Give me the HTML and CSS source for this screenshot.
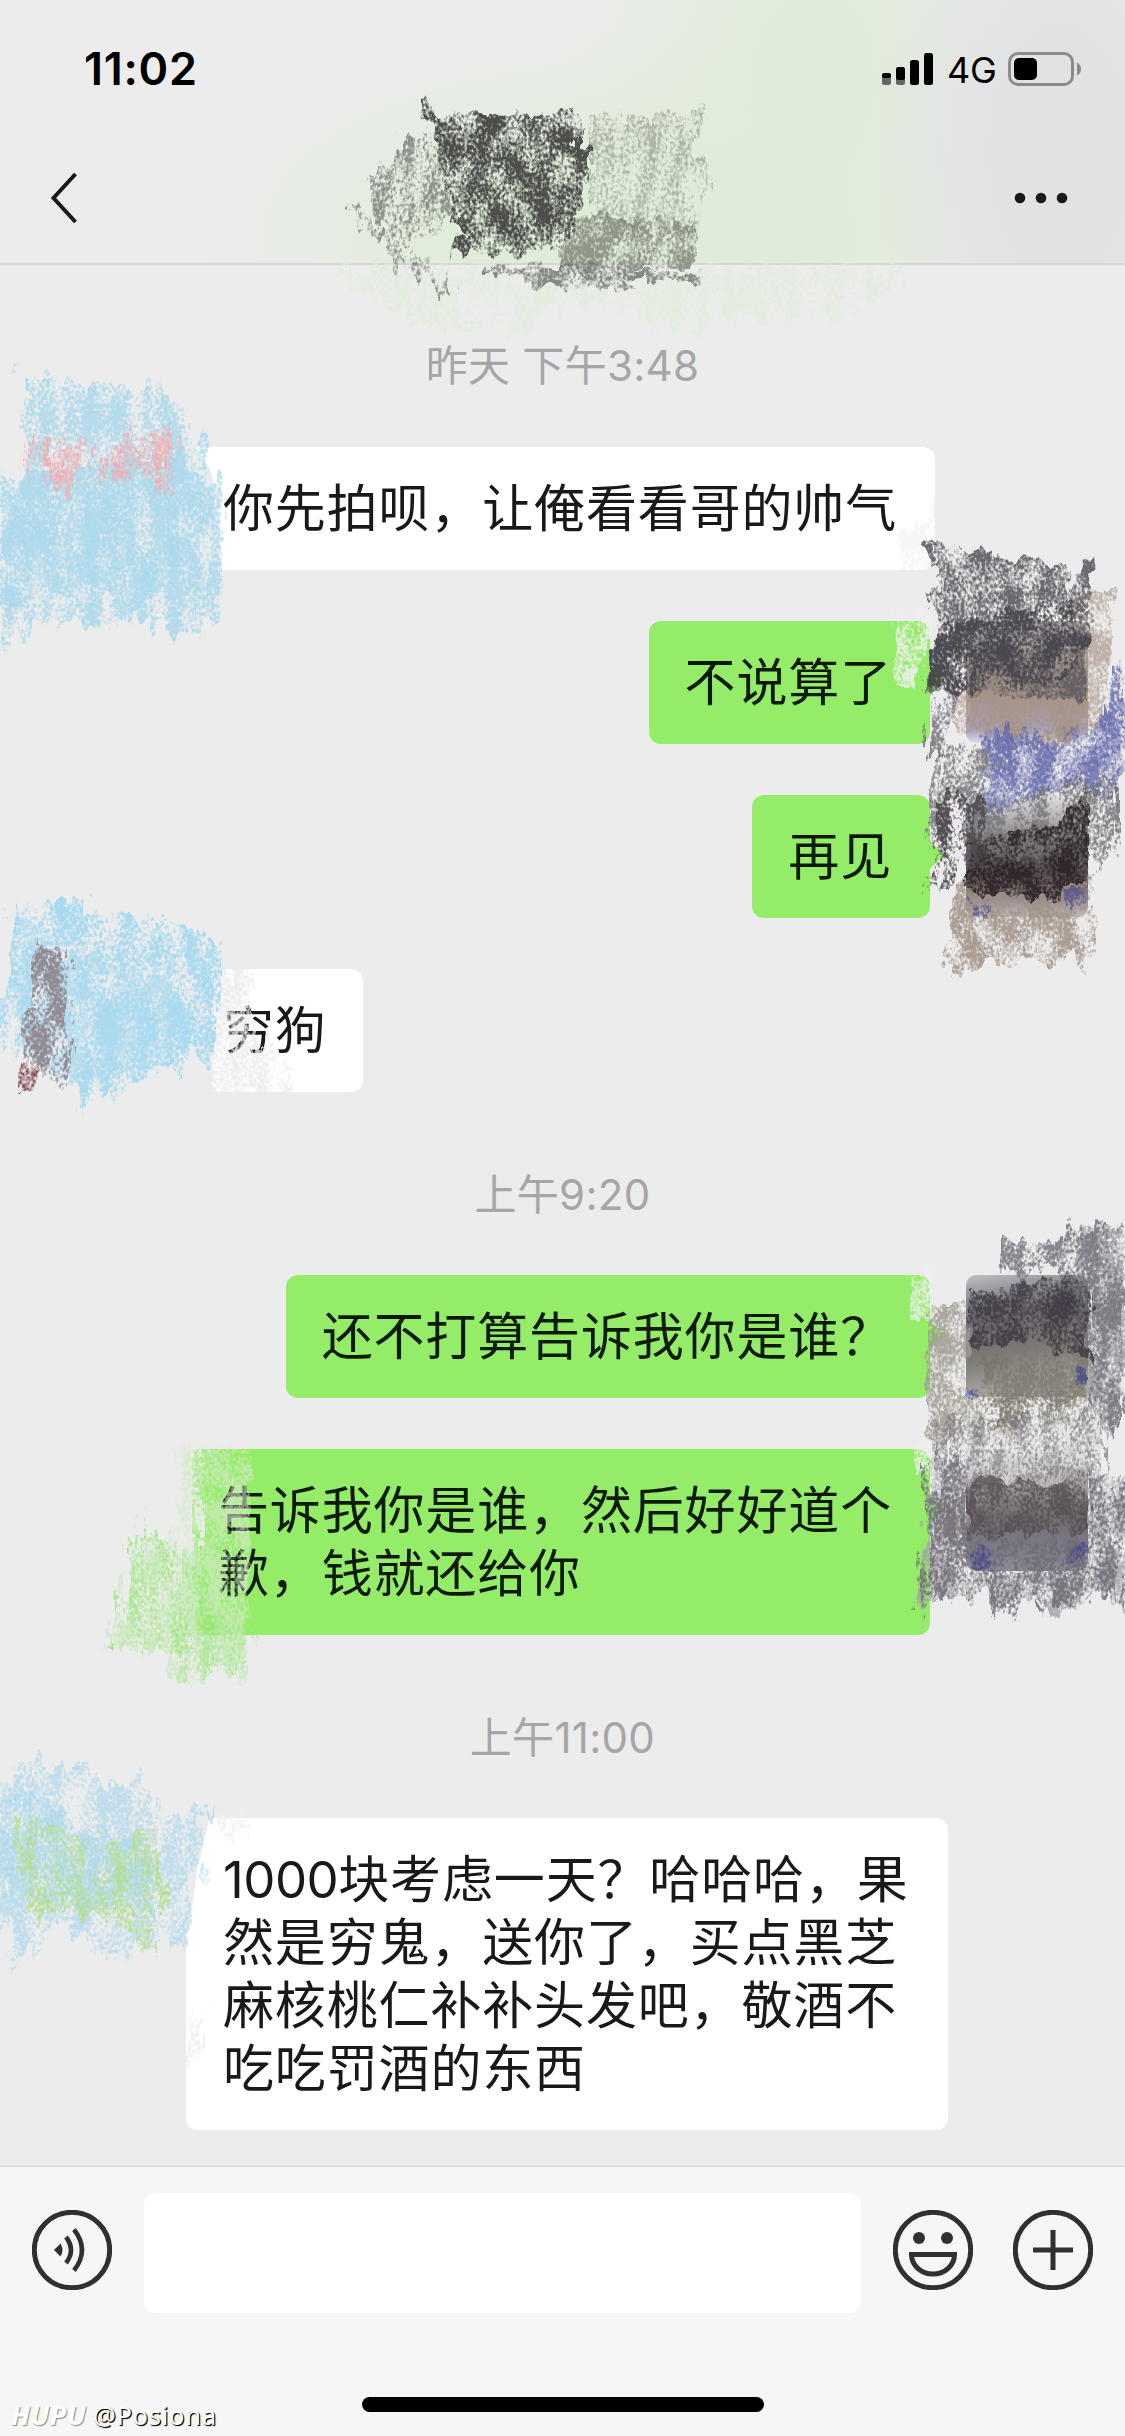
FILE: index.html
```html
<!DOCTYPE html>
<html lang="zh-CN">
<head>
<meta charset="utf-8">
<title>聊天</title>
<link rel="stylesheet" href="styles.css">
</head>
<body>
<div class="screen">
  <header class="header">
    <div class="status">
      <span class="clock">11:02</span>
      <div class="indicators">
        <svg class="signal" viewBox="0 0 51 32"><rect x="0" y="20" width="9" height="12" rx="2.5" fill="#666"/><rect x="0" y="20" width="9" height="5" rx="2.5"/><rect x="14" y="14" width="9" height="18" rx="2.5" fill="#666"/><rect x="14" y="14" width="9" height="13" rx="2.5"/><rect x="28" y="7" width="9" height="25" rx="2.5"/><rect x="42" y="0" width="9" height="32" rx="2.5"/></svg>
        <span class="network">4G</span>
        <svg class="battery" viewBox="0 0 74 34"><rect x="1.5" y="1.5" width="63" height="31" rx="8.5" fill="none" stroke="#8b8b8c" stroke-width="3"/><rect x="6" y="6" width="23" height="22" rx="5"/><path d="M69 10.500q4 2 4 6.500t-4 6.500z" fill="#8b8b8c"/></svg>
      </div>
    </div>
    <nav class="nav">
      <svg class="back" viewBox="0 0 28 52"><path d="M25.500 2L3.500 26l22 24" fill="none" stroke="#191919" stroke-width="4"/></svg>
      <svg class="more" viewBox="0 0 54 12"><circle cx="6" cy="6" r="5.300"/><circle cx="27" cy="6" r="5.300"/><circle cx="48" cy="6" r="5.300"/></svg>
    </nav>
  </header>

  <main class="chat">
    <time class="stamp first">昨天 下午3:48</time>
    <div class="row"><i class="avatar"></i><p class="bubble">你先拍呗，让俺看看哥的帅气</p></div>
    <div class="row mine"><p class="bubble">不说算了</p><i class="avatar warm"></i></div>
    <div class="row mine"><p class="bubble">再见</p><i class="avatar dark"></i></div>
    <div class="row"><i class="avatar"></i><p class="bubble short">穷狗</p></div>
    <time class="stamp">上午9:20</time>
    <div class="row mine"><p class="bubble">还不打算告诉我你是谁？</p><i class="avatar dusk"></i></div>
    <div class="row mine"><p class="bubble">告诉我你是谁，然后好好道个<br>歉，钱就还给你</p><i class="avatar night"></i></div>
    <time class="stamp last">上午11:00</time>
    <div class="row"><i class="avatar"></i><p class="bubble wide"><span class="digits">1000</span>块考虑一天？哈哈哈，果<br>然是穷鬼，送你了，买点黑芝<br>麻核桃仁补补头发吧，敬酒不<br>吃吃罚酒的东西</p></div>
  </main>

  <footer class="composer">
    <div class="tools">
      <svg class="tool" viewBox="0 0 80 80"><circle cx="40" cy="40" r="37.700"/><path d="M22 40l6.500-6.500q4 6.500 0 13z" fill="#303030" stroke="none"/><path d="M34 27q10 13 0 26M42 19.500q16 20.500 0 41" stroke-width="4.600"/></svg>
      <div class="input"></div>
      <svg class="tool smile" viewBox="0 0 80 80"><circle cx="40" cy="40" r="37.700"/><circle cx="26" cy="28" r="6" fill="#303030" stroke="none"/><circle cx="54" cy="28" r="6" fill="#303030" stroke="none"/><path d="M18.500 44.500h43a21.500 19.500 0 0 1-43 0z"/></svg>
      <svg class="tool" viewBox="0 0 80 80"><circle cx="40" cy="40" r="37.700"/><path d="M20 40h40M40 20v40"/></svg>
    </div>
    <div class="bottom">
      <div class="credit"><b>HUPU</b><span>@Posiona</span></div>
      <div class="home"></div>
    </div>
  </footer>

  <!-- Chalk strokes brushed over names and avatars -->
  <svg class="chalk" viewBox="0 0 1125 2436">
    <defs>
      <filter id="faint" x="-10%" y="-10%" width="120%" height="120%" color-interpolation-filters="sRGB">
        <feTurbulence type="fractalNoise" baseFrequency=".34 .24" numOctaves="2" seed="4" result="n"/>
        <feTurbulence type="fractalNoise" baseFrequency=".07 .018" numOctaves="2" seed="31" result="m"/>
        <feComposite in="n" in2="m" operator="arithmetic" k2=".7" k3=".45" result="nm"/>
        <feColorMatrix in="nm" values="0 0 0 0 0  0 0 0 0 0  0 0 0 0 0  0 0 0 4 -1.950" result="g"/>
        <feTurbulence type="fractalNoise" baseFrequency=".09 .025" numOctaves="3" seed="9" result="w"/>
        <feDisplacementMap in="SourceGraphic" in2="w" scale="46" xChannelSelector="R" yChannelSelector="G" result="s"/>
        <feComposite in="s" in2="g" operator="in"/>
      </filter>
      <filter id="mid" x="-10%" y="-10%" width="120%" height="120%" color-interpolation-filters="sRGB">
        <feTurbulence type="fractalNoise" baseFrequency=".34 .24" numOctaves="2" seed="12" result="n"/>
        <feTurbulence type="fractalNoise" baseFrequency=".06 .018" numOctaves="2" seed="44" result="m"/>
        <feComposite in="n" in2="m" operator="arithmetic" k2=".65" k3=".6" result="nm"/>
        <feColorMatrix in="nm" values="0 0 0 0 0  0 0 0 0 0  0 0 0 0 0  0 0 0 4.500 -2.250" result="g"/>
        <feTurbulence type="fractalNoise" baseFrequency=".09 .02" numOctaves="3" seed="3" result="w"/>
        <feDisplacementMap in="SourceGraphic" in2="w" scale="46" xChannelSelector="A" yChannelSelector="G" result="s"/>
        <feComposite in="s" in2="g" operator="in"/>
      </filter>
      <filter id="dense" x="-10%" y="-10%" width="120%" height="120%" color-interpolation-filters="sRGB">
        <feTurbulence type="fractalNoise" baseFrequency=".34 .26" numOctaves="2" seed="21" result="n"/>
        <feTurbulence type="fractalNoise" baseFrequency=".04 .03" numOctaves="2" seed="52" result="m"/>
        <feComposite in="n" in2="m" operator="arithmetic" k2=".65" k3=".6" result="nm"/>
        <feColorMatrix in="nm" values="0 0 0 0 0  0 0 0 0 0  0 0 0 0 0  0 0 0 3.800 -1.700" result="g"/>
        <feTurbulence type="fractalNoise" baseFrequency=".08 .04" numOctaves="3" seed="7" result="w"/>
        <feDisplacementMap in="SourceGraphic" in2="w" scale="24" xChannelSelector="R" yChannelSelector="G" result="s"/>
        <feComposite in="s" in2="g" operator="in"/>
      </filter>
    </defs>

    <!-- title -->
    <path filter="url(#mid)" fill="#dfecd8" opacity=".65" d="M330 265L900 265 890 290 845 314 760 318 650 335 640 312 560 298 535 320 530 335 420 325 370 295z"/>
    <g filter="url(#faint)" fill="#5c615a" opacity=".65">
      <path d="M398 135L435 132 455 225 430 238 400 240 372 205 370 178 395 165z"/>
      <path d="M347 203L372 218 400 245 428 262 458 300 445 292 395 262 372 235z"/>
    </g>
    <path filter="url(#faint)" fill="#878f83" opacity=".6" d="M590 119L708 108 696 240 590 218z"/>
    <path filter="url(#dense)" fill="#7b8276" opacity=".8" d="M560 213L640 218 697 228 692 268 560 268z"/>
    <g filter="url(#dense)" fill="#4c4f4b">
      <path d="M415 100L425 95 437 116 577 113 577 148 592 150 592 182 578 185 575 243 545 249 490 258 486 248 450 255 458 240 470 232 452 225 456 200 440 180 438 150 430 124z"/>
      <path d="M445 122L572 118 570 180 565 230 475 225 460 175z" opacity=".6"/>
    </g>
    <path filter="url(#dense)" fill="#6d716a" opacity=".8" d="M490 264L600 266 702 275 700 285 620 279 632 290 530 285 520 275 488 273z"/>

    <!-- sender, first message -->
    <path fill="#e7eced" d="M186 447h10l14 22 8 28 2 73h-34z"/>
    <path filter="url(#mid)" fill="#abd9ec" opacity=".85" d="M19 373L32 370 112 386 155 391 160 377 168 393 205 446 222 495 220 618 200 630 156 637 150 610 98 627 50 622 20 636 6 649 0 640 0 470 22 490 30 450 19 415 30 396z"/>
    <path filter="url(#dense)" fill="#abd9ec" opacity=".85" d="M0 500L30 470 185 455 215 500 190 560 150 598 128 620 110 590 94 622 80 600 50 590 0 610z"/>
    <g filter="url(#faint)" fill="#efaeb2"><path d="M30 438h16l6 44-18-6zM58 440l32 2-12 54-28-2zM94 452l60-20 2 42-60 8zM150 422l24-2-4 80-16-10z"/></g>
    <g filter="url(#dense)" fill="#efb4b8" opacity=".6"><path d="M60 450l20 2-8 36-17-2zM152 434l18-2-4 56-10-10z"/></g>

    <!-- sender, second incoming message -->
    <path fill="#ececec" d="M184 967h30l-2 127h-28z"/>
    <path filter="url(#mid)" fill="#ececec" opacity=".8" d="M205 960L238 960 248 1010 270 1045 285 1060 290 1100 205 1100z"/>
    <path filter="url(#dense)" fill="#ececec" opacity=".65" d="M205 960L238 960 245 1030 250 1098 205 1098z"/>
    <path filter="url(#mid)" fill="#aadaef" d="M14 905L45 905 85 893 87 925 115 914 145 918 205 925 224 952 212 1073 190 1052 175 1078 140 1080 120 1097 95 1092 85 1112 76 1085 40 1080 22 1045 4 1055 0 1040 4 1000z"/>
    <path filter="url(#dense)" fill="#aadaef" opacity=".75" d="M18 920L42 920 48 960 80 955 165 980 185 1020 170 1060 90 1080 40 1070 15 1015z"/>
    <path filter="url(#mid)" fill="#8f7d83" opacity=".85" d="M40 944L70 950 72 1090 40 1082 24 1094 28 1020z"/>
    <path filter="url(#dense)" fill="#8a5659" d="M22 1066L40 1070 36 1093 20 1092z"/>

    <!-- own avatars, first pair -->
    <path filter="url(#dense)" fill="#efefef" opacity=".9" d="M895 610h38l-4 38-14 36-18 4z"/>
    <path filter="url(#dense)" fill="#ececec" opacity=".45" d="M900 530l24-4 10-30h6v78h-40z"/>
    <path filter="url(#dense)" fill="#b3a296" opacity=".8" d="M1088 590L1113 588 1108 725 1088 740 1050 748 970 738 955 730 955 690z"/>
    <path filter="url(#dense)" fill="#a28f82" opacity=".7" d="M966 690L1088 670 1088 738 966 735z"/>
    <path filter="url(#mid)" fill="#77747c" d="M926 690L957 700 952 735 942 758 928 752z" opacity=".85"/>
    <path filter="url(#dense)" fill="#8588bb" opacity=".7" d="M985 728L1060 742 1095 728 1122 660 1125 765 1110 800 1085 790 1060 786 1025 800 985 812z"/>
    <path filter="url(#mid)" fill="#6267a9" opacity=".8" d="M985 728L1060 742 1095 728 1122 660 1125 765 1110 800 1085 790 1060 786 1025 800 985 812z"/>
    <path filter="url(#mid)" fill="#77757b" opacity=".85" d="M940 750L985 745 985 810 1060 780 1117 770 1117 840 1108 875 1090 850 960 860 930 850 932 790z"/>
    <path filter="url(#dense)" fill="#5f5c63" opacity=".9" d="M924 543L1072 565 1068 600 1083 560 1093 558 1088 620 1086 700 960 694 925 690 935 640 945 625 925 590 940 580z"/>
    <path filter="url(#dense)" fill="#403e46" opacity=".7" d="M938 625L1070 600 1088 640 1065 682 960 692 925 684z"/>
    <path filter="url(#dense)" fill="#a09085" opacity=".85" d="M955 880L1095 870 1093 940 1085 978 1075 950 1060 955 1050 970 1030 955 1005 968 990 960 960 978 947 970z"/>
    <path filter="url(#dense)" fill="#2b2227" opacity=".9" d="M968 838L1050 826 1088 790 1088 880 1050 900 968 890z"/>
    <path filter="url(#mid)" fill="#504b50" opacity=".9" d="M940 800L985 795 980 860 955 888 925 892 935 855z"/>
    <g filter="url(#dense)" fill="#393c91" opacity=".6"><path d="M968 904l20-2v14h-18zM1068 892l20-4v20l-18-2z"/></g>

    <!-- own avatars, second pair -->
    <g filter="url(#dense)" fill="#efefef" opacity=".8"><path d="M911 1268h24l-5 52h-20zM915 1446h18v30l-16-2z"/></g>
    <path filter="url(#dense)" fill="#95929a" opacity=".75" d="M1078 1226L1125 1228 1125 1375 1112 1440 1088 1400z"/>
    <path filter="url(#mid)" fill="#77737c" opacity=".85" d="M1002 1240L1060 1242 1078 1225 1125 1228 1125 1375 1112 1440 1088 1400 1088 1280 1002 1275z"/>
    <path filter="url(#dense)" fill="#a09b92" opacity=".85" d="M928 1310L966 1300 968 1395 1088 1390 1088 1420 1030 1430 985 1444 960 1430 935 1458 928 1440z"/>
    <path filter="url(#dense)" fill="#777268" opacity=".7" d="M980 1360L1088 1340 1085 1400 1030 1420 985 1435z"/>
    <path filter="url(#dense)" fill="#35303a" opacity=".75" d="M968 1290L1000 1296 1030 1280 1088 1278 1088 1360 1030 1340 968 1350z"/>
    <path filter="url(#dense)" fill="#a3a0a8" opacity=".8" d="M928 1462L966 1450 966 1572 1088 1572 1088 1475 1125 1478 1125 1612 1100 1590 1080 1605 1050 1612 1040 1595 1015 1600 1000 1620 990 1590 960 1598 945 1594 918 1612 925 1540z"/>
    <path filter="url(#mid)" fill="#6f6b75" opacity=".85" d="M928 1462L966 1450 966 1540 1088 1540 1088 1475 1125 1478 1125 1612 1100 1590 1080 1605 1050 1612 1040 1595 1015 1600 1000 1620 990 1590 960 1598 945 1594 918 1612 925 1540z"/>
    <path filter="url(#dense)" fill="#4f484b" opacity=".75" d="M966 1480L1088 1470 1088 1530 966 1540z"/>
    <path filter="url(#dense)" fill="#777079" opacity=".7" d="M946 1460h18v125h-18z"/>
    <path filter="url(#dense)" fill="#e4e2e1" opacity=".7" d="M966 1435L1102 1415 1102 1465 1060 1485 966 1472z"/>
    <path filter="url(#faint)" fill="#767179" opacity=".7" d="M940 1425L1102 1410 1102 1480 940 1480z"/>
    <g filter="url(#dense)" fill="#393c91" opacity=".6"><path d="M968 1552l24-6v22h-18zM1064 1548l24-4v18l-22-2zM1074 1376l12-4v16l-10-2zM968 1386l14 4v8h-10z"/></g>

    <!-- left edge of the two-line reply -->
    <path fill="#e5eee0" opacity=".75" d="M178 1447h14v190h-14z"/>
    <path filter="url(#dense)" fill="#dfe9d9" opacity=".6" d="M176 1447L249 1447 252 1500 248 1590 240 1640 176 1640z"/>
    <path filter="url(#mid)" fill="#ececec" opacity=".9" d="M176 1447L208 1447 200 1540 200 1640 176 1640z"/>
    <path filter="url(#faint)" fill="#95e873" opacity=".8" d="M142 1515L150 1536 180 1525 182 1560 210 1560 214 1620 254 1628 244 1676 210 1666 200 1678 172 1678 178 1650 140 1652 110 1654 120 1594 128 1552z"/>
    <path filter="url(#mid)" fill="#bfe8ad" opacity=".6" d="M130 1550L205 1550 215 1625 250 1630 250 1672 178 1676 174 1650 115 1650z"/>

    <!-- sender, last message -->
    <path fill="#e9eced" d="M184 1816h26l-13 55-8 60h-5z"/>
    <path filter="url(#mid)" fill="#add8ec" opacity=".7" d="M0 1790L15 1760 85 1760 102 1780 150 1785 158 1825 210 1805 196 1870 185 1950 160 1940 110 1955 60 1925 15 1968 0 1900z"/>
    <path filter="url(#dense)" fill="#a8d8ec" opacity=".65" d="M0 1785L50 1800 70 1830 150 1840 160 1920 60 1900 0 1900z"/>
    <path filter="url(#faint)" fill="#b3de84" opacity=".85" d="M22 1815L55 1830 120 1845 160 1815 158 1955 110 1915 20 1910z"/>
    <path filter="url(#mid)" fill="#f2f2f2" d="M186 2015L210 2005 205 2045 186 2085zM220 1812h24l-14 35z"/>
  </svg>
</div>
</body>
</html>
```
FILE: styles.css
```css
* { box-sizing: border-box; }

body {
  margin: 0;
  background: #ececec;
  color: #191919;
  font-family: Inter, "Noto Sans CJK SC", sans-serif;
}

.screen {
  position: relative;
  display: flex;
  flex-direction: column;
  width: 1125px;
  height: 2436px;
  overflow: hidden;
}

svg { display: block; flex: none; }

/* Header */
.header {
  height: 265px;
  border-bottom: 2px solid #d5d6d5;
  background:
    radial-gradient(ellipse 190px 330px at 1060px 150px, #e2e2e5 35%, #e2e2e500 100%),
    radial-gradient(ellipse 260px 330px at 815px 70px, #e0ecda 20%, #e0ecda00 100%),
    radial-gradient(ellipse 460px 215px at 640px 240px, #dfecd8 35%, #dfecd800 100%),
    #ececec;
}

.status {
  display: flex;
  justify-content: space-between;
  height: 138px;
  padding: 0 43px 0 84px;
}

.clock {
  padding-top: 41px;
  font-size: 45px;
  font-weight: 600;
  line-height: 56px;
  letter-spacing: .7px;
  color: #000;
}

.indicators {
  display: flex;
  align-items: center;
  height: 138px;
}

.signal { width: 51px; height: 32px; }
.network { margin: 2px 14px 0 14px; width: 47px; font-size: 36px; font-weight: 400; line-height: 40px; letter-spacing: -.3px; color: #000; white-space: nowrap; }
.battery { width: 74px; height: 34px; }

.nav {
  display: flex;
  align-items: center;
  justify-content: space-between;
  height: 120px;
  padding: 0 57px 0 50px;
}

.back { width: 28px; height: 52px; }
.more { width: 54px; height: 12px; fill: #191919; }

/* Conversation */
.chat {
  display: flex;
  flex-direction: column;
  height: 1901px;
}

.stamp {
  height: 183px;
  padding-top: 72px;
  color: #a6a6a6;
  font-size: 42px;
  line-height: 62px;
  letter-spacing: .3px;
  text-align: center;
}

.stamp.first { height: 182px; padding-top: 70px; }

.row {
  display: flex;
  gap: 30px;
  padding: 0 36px;
}

.row + .row { margin-top: 51px; }

.row.mine {
  justify-content: flex-end;
  gap: 36px;
  padding-right: 37px;
}

.avatar {
  flex: none;
  width: 120px;
  height: 120px;
  border-radius: 10px;
}

.mine .avatar { width: 122px; height: 122px; }
.warm { background: linear-gradient(#5a545980 10%, #7e7066cc 45%, #a18f83 60%, #8781b0aa 90%, #aeb0cd40); }
.dark { background: linear-gradient(#aaa8ac20, #433a40cc 50%, #302529cc 65%, #766a6899 90%, #766a6860); }
.dusk { background: linear-gradient(170deg, #77767c60, #4c4650cc 30%, #625d58cc 60%, #87827a70); }
.night { background: linear-gradient(#d8d6d600, #71686ab0 35%, #5f575cdd 55%, #6b6977dd 80%, #6b6977bb); }

.bubble {
  position: relative;
  margin: 0;
  padding: 30px 38px 30px 37px;
  border-radius: 12px;
  background: #fff;
  font-size: 51px;
  line-height: 63px;
  letter-spacing: .85px;
  white-space: nowrap;
}

.mine .bubble { padding-left: 36px; background: #95ec69; color: #0d1a08; }

.mine .bubble::after {
  content: "";
  position: absolute;
  top: 45px;
  right: -14px;
  width: 15px;
  height: 30px;
  background: inherit;
  clip-path: polygon(0 0, 100% 50%, 0 100%);
}

.bubble.short { padding-right: 36px; }
.bubble.wide { width: 762px; }
.digits { letter-spacing: -.5px; }

/* Composer */
.composer {
  display: flex;
  flex-direction: column;
  height: 270px;
  border-top: 1px solid #d4d4d4;
  background: #f6f6f6;
}

.tools {
  display: flex;
  align-items: flex-start;
  padding: 26px 32px 0;
}

.tool {
  width: 80px;
  height: 80px;
  margin-top: 17px;
  fill: none;
  stroke: #303030;
  stroke-width: 5;
}

.smile { margin-right: 40px; }

.input {
  width: 717px;
  height: 120px;
  margin: 0 32px;
  border-radius: 12px;
  background: #fff;
}

.bottom {
  display: grid;
  grid-template-columns: 362px 402px 1fr;
  align-items: end;
  flex: 1;
}

.home {
  height: 15px;
  margin-bottom: 24px;
  border-radius: 8px;
  background: #000;
}

.credit {
  display: flex;
  gap: 7px;
  align-items: baseline;
  padding: 0 0 2px 11px;
  color: #fff;
  font: 25px/38px "Noto Sans", sans-serif;
  letter-spacing: 1px;
  text-shadow: 1px 1px 1px #000, 1px 1px 0 #222;
}

.credit b {
  font-size: 27px;
  font-style: italic;
  font-weight: 700;
  letter-spacing: .6px;
  text-shadow: 1px 1px 1px #888;
}

/* Brush layer */
.chalk {
  position: absolute;
  inset: 0;
  width: 1125px;
  height: 2436px;
  pointer-events: none;
}
```
